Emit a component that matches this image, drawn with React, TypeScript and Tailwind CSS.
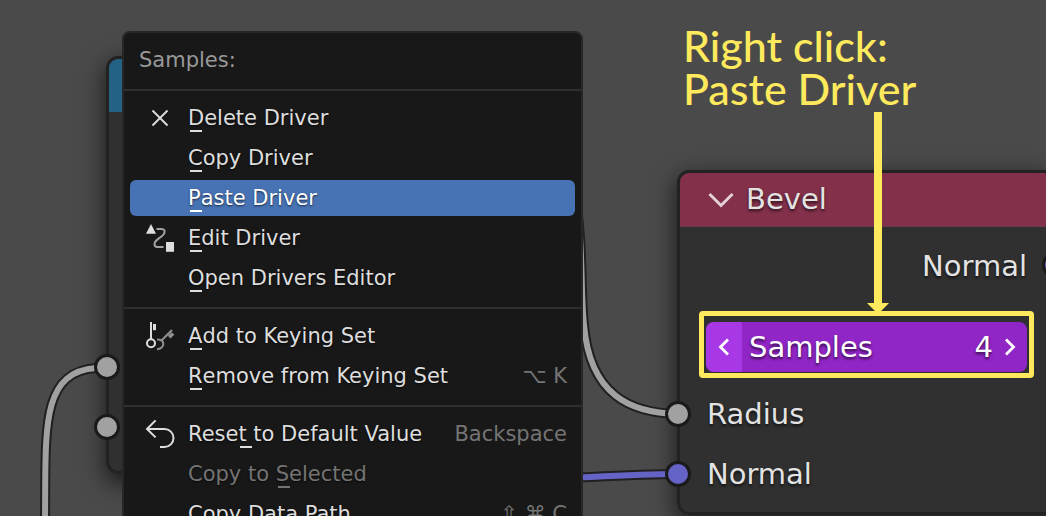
import { useState, type ReactNode } from 'react';

type Item = {
  label: string;
  mnemonic: number;
  icon?: ReactNode;
  shortcut?: string;
  active?: boolean;
  disabled?: boolean;
};

const iconClass = '-mt-0.5 size-7 shrink-0 overflow-visible';

const CloseIcon = () => (
  <svg viewBox="0 0 28 28" className={iconClass} fill="none" stroke="#dedede" strokeWidth="1.8" aria-hidden="true">
    <path d="M6.5 7.5 21.5 22.5M21.5 7.5 6.5 22.5" />
  </svg>
);

const DriverIcon = () => (
  <svg viewBox="0 0 28 28" className={iconClass} fill="none" aria-hidden="true">
    <path d="M0 10.8 5 1l5 9.8Z" fill="#dedede" />
    <path d="M10.5 6h5c3 0 3.8 2 2.6 4.6C16.6 14 10 16 8.8 19.6 8 22.4 9 24 11.6 24h6" stroke="#a2a2a2" strokeWidth="2" />
    <path d="M20 19h8v9.8h-8Z" fill="#dedede" />
  </svg>
);

const KeysIcon = () => (
  <svg viewBox="0 0 28 28" className={iconClass} fill="none" aria-hidden="true">
    <circle cx="5" cy="22.2" r="4" stroke="#dedede" strokeWidth="2" />
    <path d="M5 1v17.5" stroke="#dedede" strokeWidth="2" />
    <path d="M7 3h3v6.2H7Z" fill="#dedede" />
    <path d="M11 18.6c4.2 0 6.3 1.9 6.3 4.4s-2.3 5.2-6.3 5.2" stroke="#8f8f8f" strokeWidth="2" />
    <path d="m15.5 19.5 10.500-10.500" stroke="#8f8f8f" strokeWidth="2.2" />
    <path d="m21.8 14.8 4-3.6 2.6 2.6-4 3.6Z" fill="#8f8f8f" />
  </svg>
);

const UndoIcon = () => (
  <svg viewBox="0 0 28 28" className={iconClass} fill="none" stroke="#dedede" strokeWidth="2" aria-hidden="true">
    <path d="M9.6 1.4 1 10l8.600 8.400M1 10h17.500a9 9 0 0 1 0 18H14" />
  </svg>
);

const sections: Item[][] = [
  [
    { label: 'Delete Driver', mnemonic: 0, icon: <CloseIcon /> },
    { label: 'Copy Driver', mnemonic: 0 },
    { label: 'Paste Driver', mnemonic: 0, active: true },
    { label: 'Edit Driver', mnemonic: 0, icon: <DriverIcon /> },
    { label: 'Open Drivers Editor', mnemonic: 0 },
  ],
  [
    { label: 'Add to Keying Set', mnemonic: 0, icon: <KeysIcon /> },
    { label: 'Remove from Keying Set', mnemonic: 0, shortcut: '⌥ K' },
  ],
  [
    { label: 'Reset to Default Value', mnemonic: 4, icon: <UndoIcon />, shortcut: 'Backspace' },
    { label: 'Copy to Selected', mnemonic: 8, disabled: true },
    { label: 'Copy Data Path', mnemonic: 0, shortcut: '⇧ ⌘ C' },
  ],
];

function MenuItem({ item }: { item: Item }) {
  const { label, mnemonic } = item;
  const tone = item.active
    ? 'bg-[#4772b3] text-white'
    : item.disabled
      ? 'text-[#747474]'
      : 'text-[#dedede]';
  return (
    <li role="none" className="py-0.5">
      <button
        type="button"
        role="menuitem"
        disabled={item.disabled}
        className={`flex h-9 w-full items-center gap-3.5 rounded-md pr-2 pl-4 text-left text-[21px] whitespace-nowrap ${tone}`}
      >
        {item.icon ?? <span className="size-7 shrink-0" />}
        <span className="flex-1 pt-0.5 whitespace-pre [text-shadow:0_1px_2px_#000a]">
          {label.slice(0, mnemonic)}
          <span className="relative">
            {label[mnemonic]}
            <span className="absolute -bottom-0.5 left-0.5 h-0.5 w-3 bg-current" />
          </span>
          {label.slice(mnemonic + 1)}
        </span>
        {item.shortcut && <span className="pt-0.5 text-[#747474]">{item.shortcut}</span>}
      </button>
    </li>
  );
}

function ContextMenu() {
  return (
    <div className="absolute top-[31px] left-[122px] w-[461px] rounded-lg border-2 border-[#272727] bg-[#181818]">
      <h2 className="flex h-14 items-center px-[15px] text-[21px] text-[#989898]">Samples:</h2>
      {sections.map((items, i) => (
        <ul key={i} role="menu" className="border-t-2 border-[#2f2f2f] px-1.5 pt-[7px] pb-[9px]">
          {items.map((item) => (
            <MenuItem key={item.label} item={item} />
          ))}
        </ul>
      ))}
    </div>
  );
}

function Socket({ className }: { className: string }) {
  return <span className={`absolute size-[26px] rounded-full border-3 border-[#1a1a1a] ${className}`} />;
}

function Links() {
  const links = [
    { d: 'M96 368C40 372 46 430 45 520', color: '#a1a1a1' },
    { d: 'M574 190C584 240 580 290 584 325C590 395 630 413 678 414', color: '#a1a1a1' },
    { d: 'M570 478C610 476 640 474 678 474', color: '#6663c7' },
  ];
  return (
    <svg className="absolute inset-0 size-full" fill="none" aria-hidden="true">
      {links.map(({ d, color }) => (
        <g key={d}>
          <path d={d} stroke="#202020" strokeWidth="10" />
          <path d={d} stroke={color} strokeWidth="6" />
        </g>
      ))}
    </svg>
  );
}

const nodeClass = 'absolute rounded-xl border-3 border-[#222222] bg-[#303030]';
const shadowClass = 'absolute rounded-xl shadow-[0_8px_22px_2px_#0009]';

function TextureNode() {
  return (
    <section className={`${nodeClass} top-[56px] left-[106px] flex h-[418px] w-60 flex-col justify-between pb-3.5`}>
      <div className="h-[53px] rounded-t-[9px] bg-[#246283]" />
      <div>
        <div className="relative flex h-[60px] items-center">
          <Socket className="-left-[15px] bg-[#a1a1a1]" />
        </div>
        <div className="relative flex h-[60px] items-center">
          <Socket className="-left-[15px] bg-[#a1a1a1]" />
        </div>
      </div>
    </section>
  );
}

function SamplesField() {
  const [samples, setSamples] = useState(4);
  return (
    <div className="relative mt-[27px] mb-[11px]">
      <div className="flex h-[50px] items-center overflow-hidden rounded-lg bg-[#9126c6] text-white">
        <button
          type="button"
          aria-label="Decrease samples"
          onClick={() => setSamples((n) => n - 1)}
          className="flex h-full w-9 shrink-0 items-center justify-center bg-[#a838e6]"
        >
          <svg viewBox="0 0 12 18" className="w-3" fill="none" stroke="currentColor" strokeWidth="2.8" aria-hidden="true">
            <path d="M10 1.500 2.500 9l7.500 7.500" />
          </svg>
        </button>
        <label htmlFor="samples" className="pt-0.5 pl-[7px]">Samples</label>
        <input
          id="samples"
          value={samples}
          onChange={(e) => setSamples(Number(e.target.value) || 0)}
          className="min-w-0 flex-1 bg-transparent pt-0.5 text-right outline-none [text-shadow:inherit]"
        />
        <button
          type="button"
          aria-label="Increase samples"
          onClick={() => setSamples((n) => n + 1)}
          className="flex h-full w-[34px] shrink-0 items-center justify-center"
        >
          <svg viewBox="0 0 12 18" className="w-3" fill="none" stroke="currentColor" strokeWidth="2.8" aria-hidden="true">
            <path d="M2 1.500 9.500 9 2 16.500" />
          </svg>
        </button>
      </div>
      <div className="pointer-events-none absolute -inset-x-[7px] -top-[11px] -bottom-1.5 rounded-sm border-5 border-[#ffe95c]" />
      <svg
        viewBox="0 0 22 202"
        className="pointer-events-none absolute bottom-[calc(100%+8px)] left-1/2 w-[22px]"
        fill="#ffe95c"
        aria-hidden="true"
      >
        <path d="M7 0h8v191h7L11 202 0 191h7Z" />
      </svg>
    </div>
  );
}

function BevelNode() {
  return (
    <section className={`${nodeClass} top-[170px] left-[677px] w-[379px] text-[29px] text-[#e3e3e3] [text-shadow:0_2px_3px_#000a]`}>
      <header className="flex h-[54px] items-center gap-3 rounded-t-[9px] border-b border-[#6d3a4c] bg-[#83314a] px-7">
        <svg viewBox="0 0 26 16" className="w-[26px]" fill="none" stroke="#e3d3d8" strokeWidth="3" aria-hidden="true">
          <path d="m1.500 2 11.500 11.500L24.500 2" />
        </svg>
        <h2>Bevel</h2>
      </header>
      <div className="px-[26px] pt-2 pb-[9px]">
        <div className="relative flex h-[60px] items-center justify-end pt-[3px]">
          Normal
          <Socket className="top-[17px] -right-[41px] bg-[#6663c7]" />
        </div>
        <SamplesField />
        <div className="relative flex h-[60px] items-center pt-[3px] pl-px">
          Radius
          <Socket className="top-[18px] -left-[41px] bg-[#a1a1a1]" />
        </div>
        <div className="relative flex h-[60px] items-center pt-[3px] pl-px">
          Normal
          <Socket className="top-[18px] -left-[41px] bg-[#6663c7]" />
        </div>
      </div>
    </section>
  );
}

export default function App() {
  return (
    <main className="relative h-screen overflow-hidden bg-[#4a4a4a] font-['DejaVu_Sans',sans-serif]">
      <div className={`${shadowClass} top-[56px] left-[106px] h-[418px] w-60`} />
      <div className={`${shadowClass} top-[170px] left-[677px] h-[345px] w-[379px]`} />
      <Links />
      <TextureNode />
      <BevelNode />
      <ContextMenu />
      <div className="absolute top-6 left-[683px] font-['Lato',sans-serif] text-[43px] leading-[43px] font-medium text-[#ffe95c]">
        <p>Right click:</p>
        <p>Paste Driver</p>
      </div>
    </main>
  );
}
